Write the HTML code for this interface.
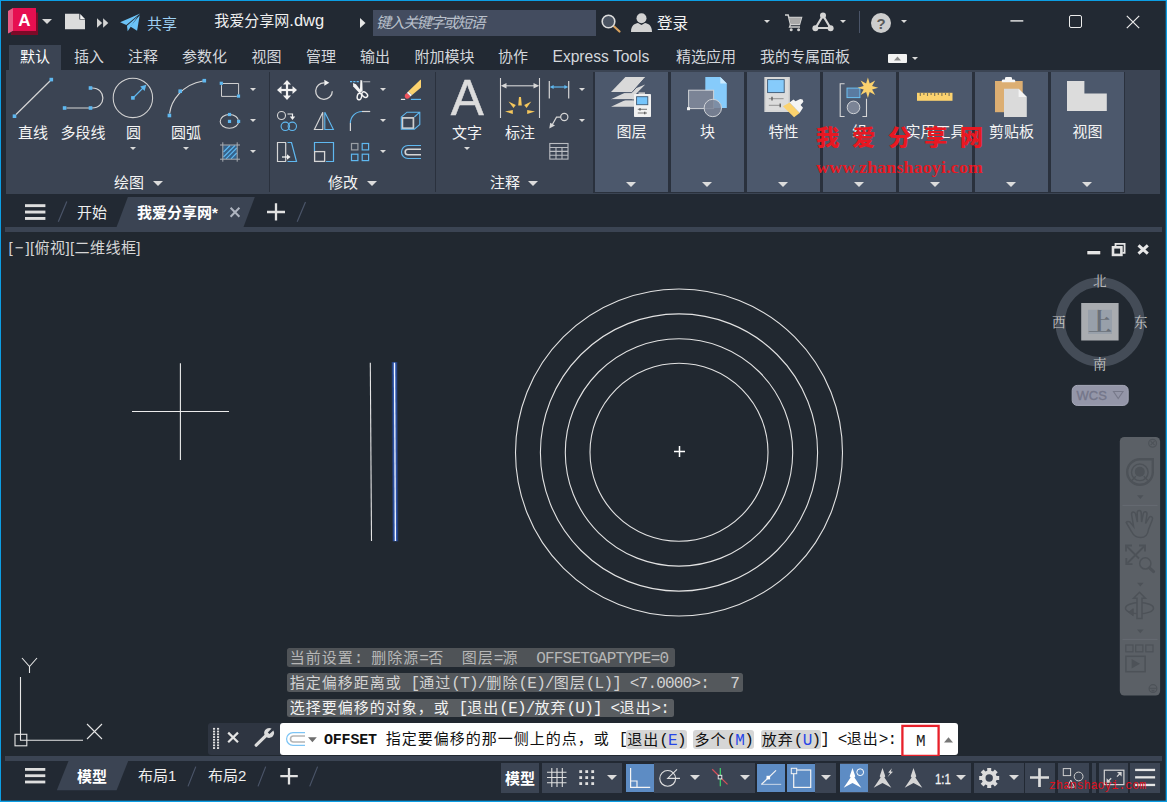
<!DOCTYPE html>
<html lang="zh-CN">
<head>
<meta charset="utf-8">
<title>AutoCAD - 我爱分享网.dwg</title>
<style>
*{box-sizing:border-box;margin:0;padding:0}
html,body{width:1167px;height:802px;overflow:hidden;background:#222933}
body{position:relative;font-family:"Liberation Sans","Noto Sans CJK SC",sans-serif;font-size:15px;color:#f2f2f2;line-height:1}
.abs{position:absolute}
.t{position:absolute;white-space:nowrap;line-height:20px;height:20px}
svg{position:absolute;overflow:visible}
.tri{position:absolute;width:0;height:0;border-left:3.4px solid transparent;border-right:3.4px solid transparent;border-top:3.9px solid #dadada}
.trib{position:absolute;width:0;height:0;border-left:5px solid transparent;border-right:5px solid transparent;border-top:5.5px solid #dcdcdc}
.pn{position:absolute;top:72px;width:73px;height:120px;background:#4c586c}
.lbl{position:absolute;white-space:nowrap;line-height:20px;height:20px;font-size:15px;color:#f4f4f4}
.sb{position:absolute;top:763px;height:30px;background:#3b4453}
.sbb{position:absolute;top:764px;height:28px;background:#5d8cc4}

.cl{position:absolute;white-space:pre;font-family:"Liberation Mono","Noto Sans CJK SC",monospace;font-size:15px;letter-spacing:1px;line-height:18px;height:18.5px}
.cl .m{font-size:16px;letter-spacing:-0.8px;font-family:"Liberation Mono",monospace}
.hl{position:absolute;left:287.3px;height:18.5px;border-radius:2.5px}
.kw{background:#d6d6d6;border-radius:3px;padding:2.9px 1.2px 0 1.2px;margin:0 -1.2px}
.kw b{font-weight:normal;color:#2746e6}
</style>
</head>
<body>
<!-- window border -->
<div class="abs" style="left:0;top:0;width:1167px;height:1px;background:#0c9ee4"></div>
<div class="abs" style="left:0;top:0;width:1px;height:802px;background:#0c9ee4"></div>
<div class="abs" style="left:1166px;top:0;width:1px;height:802px;background:#0c9ee4"></div><div class="abs" style="left:1165px;top:0;width:1px;height:802px;background:rgba(12,158,228,0.3)"></div>
<div class="abs" style="left:0;top:801px;width:1167px;height:1px;background:#0c9ee4"></div><div class="abs" style="left:0;top:800px;width:1167px;height:1px;background:rgba(12,158,228,0.35)"></div>

<!-- TITLEBAR -->
<div id="titlebar">
<!-- logo -->
<svg style="left:8px;top:8px" width="31" height="28" viewBox="0 0 31 28">
<polygon points="0,3 5,0 5,23 0,25.5" fill="#ea5b86"/>
<polygon points="3,24.5 5,23 28,23 28,4.5 30,4.5 30,27 3,27" fill="#7d0a28"/>
<rect x="5" y="0" width="23" height="23" fill="#e60f50"/>
<text x="16.5" y="18" font-family="Liberation Sans, sans-serif" font-weight="bold" font-size="17" fill="#fff" text-anchor="middle">A</text>
</svg>
<div class="trib" style="left:42px;top:19px;border-top-color:#d8d8d8"></div>
<!-- new file -->
<svg style="left:0;top:0" width="160" height="40" viewBox="0 0 160 40"><polygon points="65,13.8 79.4,13.8 79.4,19.6 85,19.6 85,29.3 65,29.3" fill="#dcdcdc"/><polygon points="80.2,14 85,18.9 80.2,18.9" fill="#f6f6f6"/></svg>
<svg style="left:97px;top:18px" width="11.3" height="10" viewBox="0 0 12 10"><polygon points="0,0 5.5,5 0,10" fill="#d4d4d4"/><polygon points="6.5,0 12,5 6.5,10" fill="#d4d4d4"/></svg>
<!-- paper plane -->
<svg style="left:0;top:0" width="160" height="40" viewBox="0 0 160 40"><g fill="#6cc3f7"><polygon points="120.1,22.3 140.2,13.5 126.3,25"/><polygon points="127,25.7 137.6,16.4 127.7,31.3"/><polygon points="139.7,15.3 137.1,30.7 130.3,26.5"/></g></svg>
<div class="t" style="left:147px;top:14.3px;font-size:15px;color:#9dd0f3">共享</div>
<div class="t" style="left:214.3px;top:10.2px;font-size:15px;color:#f0f0f0">我爱分享网<span style="font-size:16.5px">.dwg</span></div>
<svg style="left:360px;top:18px" width="6" height="10" viewBox="0 0 6 10"><polygon points="0,0 5.5,5 0,10" fill="#e6e6e6"/></svg>
<div class="abs" style="left:373px;top:10px;width:223px;height:26px;background:#434c5f"></div>
<div class="t" style="left:376px;top:13px;font-size:15px;color:#b9c0cb;font-style:italic;letter-spacing:-1.5px">键入关键字或短语</div>
<!-- magnifier -->
<svg style="left:601px;top:14px" width="20" height="19" viewBox="0 0 20 19"><line x1="12" y1="11.5" x2="18.5" y2="17.5" stroke="#d9a25e" stroke-width="2.2" stroke-linecap="round"/><circle cx="7.5" cy="7.5" r="6.3" fill="#4a5361" stroke="#dcdcdc" stroke-width="1.6"/></svg>
<!-- user -->
<svg style="left:631px;top:13px" width="21" height="19" viewBox="0 0 21 19"><circle cx="10.5" cy="5.2" r="5" fill="#d2d2d2"/><path d="M0,19 C0,12 4,10.5 7,10 L10.5,12 L14,10 C17,10.5 21,12 21,19 Z" fill="#d2d2d2"/></svg>
<div class="t" style="left:657px;top:13.6px;font-size:15.6px;color:#f4f4f4">登录</div>
<div class="tri" style="left:764px;top:20.0px"></div>
<!-- cart -->
<svg style="left:785px;top:14px" width="18" height="18" viewBox="0 0 18 18"><path d="M0,1 H3.2 L5.5,10.5 H14.5 L16.5,3.5 H4" fill="none" stroke="#cfcfcf" stroke-width="1.5"/><polygon points="4.2,3.8 16.2,3.8 14.4,10 5.8,10" fill="#a9a9a9"/><path d="M5.5,10.5 L4.5,13 H15" fill="none" stroke="#cfcfcf" stroke-width="1.3"/><circle cx="6.2" cy="15.7" r="1.5" fill="#cfcfcf"/><circle cx="13.6" cy="15.7" r="1.5" fill="#cfcfcf"/></svg>
<!-- autodesk app triangle -->
<svg style="left:812px;top:12px" width="22" height="20" viewBox="0 0 22 20"><polygon points="11,3.5 3.5,16 18.5,16" fill="none" stroke="#d4d4d4" stroke-width="2.2" stroke-linejoin="round"/><circle cx="11" cy="3.4" r="3" fill="#d4d4d4"/><circle cx="3.4" cy="16.2" r="3" fill="#d4d4d4"/><circle cx="18.6" cy="16.2" r="3" fill="#d4d4d4"/></svg>
<div class="tri" style="left:840px;top:20.0px"></div>
<div class="abs" style="left:859px;top:11px;width:1px;height:22px;background:#4a5468"></div>
<svg style="left:871px;top:12.5px" width="20" height="20" viewBox="0 0 20 20"><circle cx="10" cy="10" r="10" fill="#cdcdcd"/><text x="10" y="15.5" font-family="Liberation Sans, sans-serif" font-weight="bold" font-size="15" fill="#5a5a5a" text-anchor="middle">?</text></svg>
<div class="tri" style="left:901px;top:20.0px"></div>
<!-- window controls -->
<svg style="left:1010px;top:18px" width="14" height="6" viewBox="0 0 14 6"><path d="M0.4,2.9 H13.3" stroke="#ececec" stroke-width="1.4"/></svg>
<div class="abs" style="left:1068.5px;top:15px;width:13px;height:13px;border:1.3px solid #ececec;border-radius:2px"></div>
<svg style="left:1126px;top:15px" width="14" height="14" viewBox="0 0 14 14"><path d="M0.8,0.8 L13.2,13.2 M13.2,0.8 L0.8,13.2" stroke="#ececec" stroke-width="1.2"/></svg>
</div>
<!-- RIBBON TABS -->
<div id="rtabs">
<div class="abs" style="left:9px;top:45px;width:52px;height:26px;background:#3b4453"></div>
<div class="t" style="left:20px;top:47.4px;font-size:15px;color:#ffffff">默认</div>
<div class="t" style="left:74px;top:47.4px;font-size:15px;color:#d4d7dc">插入</div>
<div class="t" style="left:128px;top:47.4px;font-size:15px;color:#d4d7dc">注释</div>
<div class="t" style="left:182px;top:47.4px;font-size:15px;color:#d4d7dc">参数化</div>
<div class="t" style="left:251.5px;top:47.4px;font-size:15px;color:#d4d7dc">视图</div>
<div class="t" style="left:306px;top:47.4px;font-size:15px;color:#d4d7dc">管理</div>
<div class="t" style="left:360px;top:47.4px;font-size:15px;color:#d4d7dc">输出</div>
<div class="t" style="left:414.5px;top:47.4px;font-size:15px;color:#d4d7dc">附加模块</div>
<div class="t" style="left:498px;top:47.4px;font-size:15px;color:#d4d7dc">协作</div>
<div class="t" style="left:676px;top:47.4px;font-size:15px;color:#d4d7dc">精选应用</div>
<div class="t" style="left:760px;top:47.4px;font-size:15px;color:#d4d7dc">我的专属面板</div>
<div class="t" style="left:552.5px;top:47.4px;font-size:15.6px;color:#d4d7dc" id="et">Express Tools</div>
<div class="abs" style="left:888px;top:54px;width:19px;height:9px;background:#f2f2f2;border-radius:1px"></div>
<svg style="left:894px;top:56px" width="7" height="5" viewBox="0 0 7 5"><polygon points="0,4.5 3.5,0.5 7,4.5" fill="#8a8a8a"/></svg>
<div class="tri" style="left:912px;top:56.5px"></div>
</div>
<!-- RIBBON -->
<div id="ribbon">
<div class="abs" style="left:6px;top:70px;width:1154px;height:124px;background:#3b4453"></div>
<div class="abs" style="left:269px;top:72px;width:1px;height:120px;background:#2a313d"></div><div class="abs" style="left:435px;top:72px;width:1px;height:120px;background:#2a313d"></div>
<div class="abs" style="left:593px;top:71.5px;width:532.3px;height:121px;background:#2a313d"></div>
<div class="lbl" style="left:18px;top:123px">直线</div>
<div class="lbl" style="left:60.5px;top:123px">多段线</div>
<div class="lbl" style="left:126px;top:123px">圆</div>
<div class="lbl" style="left:171px;top:123px">圆弧</div>
<div class="lbl" style="left:452px;top:123px">文字</div>
<div class="lbl" style="left:505px;top:123px">标注</div>
<div class="lbl" style="left:114px;top:172.5px">绘图</div>
<div class="lbl" style="left:328px;top:172.5px">修改</div>
<div class="lbl" style="left:490px;top:172.5px">注释</div>
<div class="abs" style="left:450.8px;top:70.3px;font-size:49.5px;line-height:56px;color:#dcdcdc;-webkit-text-stroke:0.5px #dcdcdc;font-family:'Liberation Sans',sans-serif" id="bigA">A</div>
<div class="tri" style="left:130.2px;top:146.7px"></div><div class="tri" style="left:183px;top:146.7px"></div><div class="tri" style="left:464px;top:146.7px"></div><div class="tri" style="left:250px;top:88.1px"></div><div class="tri" style="left:250px;top:119.0px"></div><div class="tri" style="left:250px;top:149.7px"></div><div class="tri" style="left:380px;top:88.1px"></div><div class="tri" style="left:380px;top:119.0px"></div><div class="tri" style="left:380px;top:149.7px"></div><div class="tri" style="left:579px;top:88.1px"></div><div class="tri" style="left:579px;top:119.0px"></div>
<div class="trib" style="left:152.5px;top:181.3px"></div><div class="trib" style="left:366.5px;top:181.3px"></div><div class="trib" style="left:528px;top:181.3px"></div>
<div class="pn" style="left:595px"><div class="lbl" style="left:0;width:73px;text-align:center;top:49.6px">图层</div><div class="trib" style="left:30.7px;top:110px"></div></div>
<div class="pn" style="left:671px"><div class="lbl" style="left:0;width:73px;text-align:center;top:49.6px">块</div><div class="trib" style="left:30.7px;top:110px"></div></div>
<div class="pn" style="left:747px"><div class="lbl" style="left:0;width:73px;text-align:center;top:49.6px">特性</div><div class="trib" style="left:30.7px;top:110px"></div></div>
<div class="pn" style="left:823px"><div class="lbl" style="left:0;width:73px;text-align:center;top:49.6px">组</div><div class="trib" style="left:30.7px;top:110px"></div></div>
<div class="pn" style="left:899px"><div class="lbl" style="left:0;width:73px;text-align:center;top:49.6px">实用工具</div><div class="trib" style="left:30.7px;top:110px"></div></div>
<div class="pn" style="left:975px"><div class="lbl" style="left:0;width:73px;text-align:center;top:49.6px">剪贴板</div><div class="trib" style="left:30.7px;top:110px"></div></div>
<div class="pn" style="left:1051px"><div class="lbl" style="left:0;width:73px;text-align:center;top:49.6px">视图</div><div class="trib" style="left:30.7px;top:110px"></div></div>
<svg style="left:0;top:0" width="1167" height="802" viewBox="0 0 1167 802" id="ribsvg">
<line x1="16" y1="114.5" x2="50" y2="81" stroke="#d6d6d6" stroke-width="1.2"/><rect x="12.7" y="114.4" width="3.6" height="3.6" fill="#5fb8f0"/><rect x="49.5" y="77.8" width="3.6" height="3.6" fill="#5fb8f0"/>
<path d="M66.5,108 H89 M92,88 C106.5,88 106.5,108 92,108" fill="none" stroke="#d6d6d6" stroke-width="1.2"/><rect x="62.8" y="106.2" width="3.6" height="3.6" fill="#5fb8f0"/><rect x="88.7" y="106.2" width="3.6" height="3.6" fill="#5fb8f0"/><rect x="88.7" y="86.2" width="3.6" height="3.6" fill="#5fb8f0"/>
<circle cx="132.9" cy="97.9" r="19.7" fill="none" stroke="#d2d2d2" stroke-width="1.05"/><line x1="133" y1="98" x2="143.5" y2="87.5" stroke="#5fb8f0" stroke-width="1.1"/><polygon points="146.3,84.8 140.2,86.6 144.6,91" fill="#5fb8f0"/><rect x="131.1" y="96.1" width="3.6" height="3.6" fill="#5fb8f0"/>
<path d="M169.6,113.5 C171,101 182,84.5 203,81" fill="none" stroke="#d6d6d6" stroke-width="1.2"/><rect x="167.6" y="113.7" width="3.6" height="3.6" fill="#5fb8f0"/><rect x="178.4" y="89.4" width="3.6" height="3.6" fill="#5fb8f0"/><rect x="202.5" y="78.9" width="3.6" height="3.6" fill="#5fb8f0"/>
<path d="M223,83.5 H238.6 V94.6 M236.8,96.4 H221.5 V85.2" fill="none" stroke="#d0d0d0" stroke-width="1"/><rect x="219.7" y="81.7" width="3.2" height="3.2" fill="#5fb8f0"/><rect x="236.9" y="94.5" width="3.2" height="3.2" fill="#5fb8f0"/>
<ellipse cx="229.4" cy="121.4" rx="9.2" ry="6.9" fill="none" stroke="#d6d6d6" stroke-width="1.1"/><rect x="227.9" y="112.9" width="3.2" height="3.2" fill="#5fb8f0"/><rect x="227.9" y="119.8" width="3.2" height="3.2" fill="#5fb8f0"/><rect x="237.0" y="119.8" width="3.2" height="3.2" fill="#5fb8f0"/>
<rect x="223.2" y="145.3" width="13.6" height="13.6" fill="#35638c"/><path d="M223.5,152 L230,145.5 M223.5,157 L235,145.5 M226,158.8 L236.7,148 M231,158.8 L236.7,153" stroke="#5fb8f0" stroke-width="1.1" fill="none"/><path d="M222.8,142.3 V161.7 M237.2,142.3 V161.7 M220,145 H240 M220,159.2 H240" stroke="#a9adb3" stroke-width="1" fill="none"/>
<g transform="translate(287,90)" fill="#f2f2f2" stroke="none"><rect x="-7" y="-1.1" width="14" height="2.2"/><rect x="-1.1" y="-7" width="2.2" height="14"/><polygon points="-10,0 -5.5,-4 -5.5,4"/><polygon points="10,0 5.5,-4 5.5,4"/><polygon points="0,-10 -4,-5.5 4,-5.5"/><polygon points="0,10 -4,5.5 4,5.5"/></g>
<g transform="translate(324,91)"><path d="M0.5,-8.2 A8.3,8.3 0 1 0 8.3,0.2" fill="none" stroke="#d6d6d6" stroke-width="1.3"/><polygon points="0.3,-11.2 0.3,-5.2 5.3,-8.3" fill="#f2f2f2"/></g>
<g><path d="M350,81.7 H359" stroke="#5fb8f0" stroke-width="1.3" stroke-dasharray="2.2 1.1"/><path d="M363.2,81.7 H370.2" stroke="#9a9fa6" stroke-width="1.3"/><polygon points="353,83 356,84.3 361.6,91.5 359.6,93.2 353.2,86.4" fill="#f4f4f4"/><polygon points="360.4,80 362.3,80.6 362.6,91 359.8,92.5" fill="#f4f4f4"/><ellipse cx="359.4" cy="96.5" rx="2.2" ry="3.3" fill="none" stroke="#f4f4f4" stroke-width="1.4" transform="rotate(12 359.4 96.5)"/><ellipse cx="364.7" cy="94.7" rx="2.2" ry="3.3" fill="none" stroke="#f4f4f4" stroke-width="1.4" transform="rotate(-50 364.7 94.7)"/></g>
<g><path d="M400.9,99.4 H405.2" stroke="#e6e6e6" stroke-width="1.2"/><path d="M410.9,99.4 H421" stroke="#5fb8f0" stroke-width="1.2"/><polygon points="421,79.6 421,87.5 412.1,94.9 408.2,91.6 419.6,80.4" fill="#fbd26e"/><polygon points="408.2,91.6 412.1,94.9 410.4,96.6 406.8,93" fill="#f8f4f0"/><path d="M406.8,93 L410.4,96.6 Q408.6,99.6 406.2,98.6 Q403.8,97 405.2,94.6 Z" fill="#f0545c"/></g>
<g transform="translate(287,121)"><circle cx="-5.5" cy="-5.5" r="4" fill="none" stroke="#d6d6d6" stroke-width="1.1"/><path d="M0.5,-7 H5.5 V-3.5" fill="none" stroke="#f2f2f2" stroke-width="1.2"/><polygon points="5.5,-1 2.8,-4.5 8.2,-4.5" fill="#f2f2f2"/><circle cx="-1.7" cy="5.3" r="4.2" fill="none" stroke="#5fb8f0" stroke-width="1.1"/><circle cx="5.3" cy="5.3" r="4.2" fill="none" stroke="#5fb8f0" stroke-width="1.1"/></g>
<g transform="translate(324,121)"><polygon points="-1.2,-8.8 -1.2,8.5 -9.6,8.5" fill="none" stroke="#d6d6d6" stroke-width="1.1"/><polygon points="0.8,-8.8 0.8,8.5 9.4,8.5" fill="none" stroke="#5fb8f0" stroke-width="1.1"/></g>
<g fill="none" stroke-width="1.2"><path d="M350.4,131 V123" stroke="#d6d6d6"/><path d="M350.4,123 A11.6,11.6 0 0 1 362,111.5" stroke="#5fb8f0"/><path d="M362,111.5 H370.2" stroke="#d6d6d6"/></g>
<g fill="none"><rect x="402.4" y="117.9" width="11" height="10.3" stroke="#cfcfcf" stroke-width="1.7"/><path d="M401.3,129.2 V117 L407,112.2 H419.8 V124.4 L414.4,129.2 Z M414.4,117 L419.8,112.2" stroke="#5fb8f0" stroke-width="1.1"/></g>
<g transform="translate(287,152)"><path d="M-1,-9.5 H-9.5 V9.5 H-1 M-1.3,-9.5 V9.5" fill="none" stroke="#d6d6d6" stroke-width="1.2"/><path d="M-5,5 H1" stroke="#f2f2f2" stroke-width="1.3"/><polygon points="3.5,5 0,2.3 0,7.7" fill="#f2f2f2"/><path d="M0.5,-9.5 H4.5 L9.5,9.5 H0.5" fill="none" stroke="#5fb8f0" stroke-width="1.2"/></g>
<g transform="translate(324,152)"><path d="M-9.5,-0.5 V-9.5 H9.5 V9.5 H2" fill="none" stroke="#5fb8f0" stroke-width="1.2"/><rect x="-9.4" y="-0.4" width="10" height="9.8" fill="none" stroke="#d6d6d6" stroke-width="1.3"/></g>
<g transform="translate(360,152)" fill="none" stroke-width="1.2"><rect x="-8.5" y="-8.5" width="6.4" height="6.4" stroke="#9a9fa6"/><rect x="2.2" y="-8.5" width="6.4" height="6.4" stroke="#5fb8f0"/><rect x="-8.5" y="2.2" width="6.4" height="6.4" stroke="#5fb8f0"/><rect x="2.2" y="2.2" width="6.4" height="6.4" stroke="#5fb8f0"/></g>
<g transform="translate(411,152)" fill="none"><path d="M10,-6.5 H-3 A6.5,6.5 0 0 0 -3,6.5 H10" stroke="#5fb8f0" stroke-width="1.2"/><path d="M10,-2.8 H-3 A2.8,2.8 0 0 0 -3,2.8 H10" stroke="#d6d6d6" stroke-width="1.6"/></g>
<path d="M500.5,78 V118 M539.5,78 V118" stroke="#d6d6d6" stroke-width="1.1"/><path d="M504,85.8 H536" stroke="#d6d6d6" stroke-width="1.1"/><polygon points="500.8,85.8 506.5,83 506.5,88.6" fill="#d6d6d6"/><polygon points="539.2,85.8 533.5,83 533.5,88.6" fill="#d6d6d6"/>
<g fill="#f5c75c"><polygon points="519,97 521,97 521.8,105.5 518.2,105.5"/><polygon points="508.5,101.5 515.8,105 513.5,108"/><polygon points="531.3,101.5 524.2,105 526.5,108"/><polygon points="505,111.5 512.8,110 512.8,114"/><polygon points="535,111.5 527.2,110 527.2,114"/></g>
<path d="M549.3,81 V98.5 M568.7,81 V98.5" stroke="#d6d6d6" stroke-width="1.2"/><path d="M552,87 H566" stroke="#5fb8f0" stroke-width="1.2"/><polygon points="549.8,87 553.6,85 553.6,89" fill="#5fb8f0"/><polygon points="568.2,87 564.4,85 564.4,89" fill="#5fb8f0"/>
<circle cx="564.3" cy="117" r="3.6" fill="none" stroke="#d6d6d6" stroke-width="1.2"/><path d="M560.7,117.2 H556.5 L551.5,126" fill="none" stroke="#d6d6d6" stroke-width="1.2"/><polygon points="549.3,128.6 550.2,122.8 555,125.5" fill="#d6d6d6"/>
<g stroke="#b9bcc1" stroke-width="1.1" fill="none"><rect x="549.8" y="143.5" width="18.2" height="15.6"/><path d="M549.8,147.5 H568 M549.8,151.4 H568 M549.8,155.3 H568 M556,147.5 V159 M562,147.5 V159"/></g>
<g fill="#d9d9d9"><polygon points="611,106.7 625.4,100 632,100 634,96 634,106.7"/><polygon points="611,99.3 625.4,92.5 645.2,84.5 634,96 634,99.3"/><polygon points="611,92 625.4,77 645.2,77 632.2,92"/></g>
<path d="M611.8,92.6 L631.8,92.6 L644.8,78" fill="none" stroke="#4c586c" stroke-width="1"/><path d="M611.8,99.9 L634,99.9" fill="none" stroke="#4c586c" stroke-width="1"/>
<rect x="638.5" y="92.3" width="6.5" height="2.2" fill="#c4c4c4"/><rect x="634" y="94" width="17" height="23" rx="0.8" fill="#f1f1f1"/><rect x="636.6" y="96.7" width="11.2" height="8" fill="#76c5fb" stroke="#3d5873" stroke-width="0.9"/><path d="M637.8,109.3 H647 M637.8,113 H647" stroke="#666" stroke-width="0.9"/><path d="M640,108 V110.6 M644.8,111.7 V114.3" stroke="#444" stroke-width="1"/>
<polygon points="705.3,77 720.3,77 726.8,83.6 726.8,108 705.3,108" fill="#86cbfb"/><polygon points="720.3,77 726.8,83.6 720.3,83.6" fill="#cbe9fd"/>
<rect x="688.6" y="90.2" width="25" height="18.4" fill="#7b8496" stroke="#cfd2d6" stroke-width="1"/><rect x="687" y="107.2" width="3" height="3" fill="#f2f2f2"/><circle cx="712.8" cy="108" r="8.7" fill="#7b8496" fill-opacity="0.85" stroke="#cfd2d6" stroke-width="1"/>
<rect x="764.4" y="77" width="25.4" height="35" fill="#dcdcdc"/><rect x="765.4" y="78" width="23.4" height="33" fill="none" stroke="#cfcfcf" stroke-width="0.8"/><rect x="767.6" y="79.6" width="16.6" height="13" fill="#86cbfb" stroke="#3d5873" stroke-width="0.9"/><path d="M768.8,98.7 H783.6 M768.8,105.3 H781" stroke="#8a8a8a" stroke-width="0.9"/><path d="M772,96.8 V100.6 M780.2,103.4 V107.2" stroke="#555" stroke-width="1.3"/>
<polygon points="782.9,106.3 789.8,102.4 799.6,113.1 794.1,117.2" fill="#fbd26e"/><polygon points="789.5,102.6 793.5,99.6 795.5,101.2 800.2,99 802.6,99.4 803.4,101.8 800.6,105 803,107.8 799.6,113.1" fill="#f4f4f4"/>
<path d="M844.6,83.8 H840.2 V116.5 H844.6 M862.4,116.5 H866.5 V98.8" fill="none" stroke="#d6d6d6" stroke-width="1.1"/><rect x="847" y="88.1" width="12.9" height="9.5" fill="#5a7ba1" stroke="#6cc0f2" stroke-width="1"/><circle cx="853.5" cy="107.4" r="6.3" fill="#7b8496" stroke="#cfd2d6" stroke-width="1"/>
<polygon points="867.9,77.5 869.7,83.6 875.2,80.5 872.1,86.0 878.2,87.8 872.1,89.6 875.2,95.1 869.7,92.0 867.9,98.1 866.1,92.0 860.6,95.1 863.7,89.6 857.6,87.8 863.7,86.0 860.6,80.5 866.1,83.6" fill="#fbd26e"/>
<rect x="917" y="92.8" width="35.5" height="8" fill="#fbd26e"/><path d="M920.3,92.8 V96 M923.9,92.8 V95 M927.5,92.8 V96 M931.1,92.8 V95 M934.7,92.8 V96 M938.3,92.8 V95 M941.9,92.8 V96 M945.5,92.8 V95 M949.1,92.8 V96" stroke="#7d7458" stroke-width="1.1"/>
<rect x="995" y="81" width="27.7" height="31.2" fill="#dcae72"/><path d="M1001.8,82.3 V80.5 Q1001.8,79.5 1003.5,79.5 H1005 V78 Q1005,77 1006.5,77 H1010.5 Q1012,77 1012,78 V79.5 H1013.5 Q1015.2,79.5 1015.2,80.5 V82.3 Z" fill="#f6f6f6"/><polygon points="1004,88.7 1018.6,88.7 1026.8,97 1026.8,117 1004,117" fill="#dadada"/><polygon points="1018.6,88.7 1026.8,97 1018.6,97" fill="#f3f3f3"/>
<polygon points="1067,81 1084.4,81 1084.4,93.6 1106.8,93.6 1106.8,111 1067,111" fill="#dcdcdc"/>
</svg>
</div>
<!-- FILE TABS -->
<div id="ftabs">
<div class="abs" style="left:5px;top:227px;width:1157px;height:5px;background:#3b4453"></div>
<svg style="left:0;top:0" width="1167" height="802" viewBox="0 0 1167 802">
<polygon points="127.9,197 254.8,197 243.5,227 116.6,227" fill="#3b4453"/>
<g fill="#dedede"><rect x="25" y="204.2" width="20.4" height="2.9"/><rect x="25" y="210.6" width="20.4" height="2.9"/><rect x="25" y="217" width="20.4" height="2.9"/></g>
<path d="M66.8,201.6 L58.3,221.7 M305.5,201.9 L297.2,221.7" stroke="#4a5468" stroke-width="1.2"/>
<path d="M230.6,207.8 L239.4,216.8 M239.4,207.8 L230.6,216.8" stroke="#aeb4bf" stroke-width="2"/>
<path d="M267,212 H285 M276,203.2 V220.6" stroke="#e2e2e2" stroke-width="2.3"/>
</svg>
<div class="t" style="left:77px;top:202.5px;font-size:15px;color:#eeeeee">开始</div>
<div class="t" style="left:137px;top:202.5px;font-size:15px;color:#ffffff;font-weight:bold">我爱分享网*</div>
</div>
<!-- DRAWING -->
<div id="drawing">
<div class="abs" style="left:1px;top:232px;width:1164px;height:524px;background:#212830"></div>
<div class="t" style="left:8.6px;top:238px;font-size:15.1px;color:#d6d6d6;letter-spacing:0.35px" id="vpl">[<span style="margin:0 1.6px">−</span>][俯视][二维线框]</div>
<svg style="left:0;top:0" width="1167" height="802" viewBox="0 0 1167 802">
<!-- crosshair -->
<path d="M180.4,363.2 V460 M132,411.5 H229" stroke="#ececec" stroke-width="1.1"/>
<!-- lines -->
<line x1="370.3" y1="362.7" x2="371.5" y2="541" stroke="#e4e4e4" stroke-width="1.1"/>
<line x1="394.5" y1="362" x2="395.4" y2="541.6" stroke="#2c52a8" stroke-opacity="0.3" stroke-width="6.2"/><line x1="394.5" y1="362.3" x2="395.4" y2="541.3" stroke="#2c52a8" stroke-opacity="0.6" stroke-width="4.8"/><line x1="394.5" y1="362.5" x2="395.4" y2="541" stroke="#2d54ac" stroke-width="3.4"/>
<line x1="394.5" y1="362.7" x2="395.4" y2="541" stroke="#f2f6ff" stroke-width="1.3"/>
<!-- circles -->
<g fill="none" stroke="#e2e2e2" stroke-width="1.1"><circle cx="679" cy="452.5" r="163.5"/><circle cx="679" cy="452.5" r="138.6"/><circle cx="679" cy="452.4" r="113.7"/><circle cx="679" cy="452.2" r="89"/></g>
<path d="M674,451.5 H685 M679.5,446 V457" stroke="#ffffff" stroke-width="1.5"/>
<!-- UCS -->
<g fill="none" stroke="#e6e6e6" stroke-width="1.1"><path d="M20.5,677 V740.2 H83"/><rect x="15" y="734.3" width="11.8" height="11.5"/><path d="M22,658 L29.5,666.5 L37,658 M29.5,666.5 V673"/><path d="M87,724 L102,739 M102,724 L87,739"/></g>
<!-- viewport controls -->
<g><rect x="1086.5" y="250.3" width="14.5" height="4.8" fill="#1a1e25"/><rect x="1087.3" y="251" width="13" height="3.4" fill="#e4e4e4"/>
<path d="M1115.5,246 V243.8 H1124.6 V252.8 H1122.4" fill="none" stroke="#e4e4e4" stroke-width="1.8"/>
<rect x="1113" y="247.3" width="8.4" height="7.6" fill="none" stroke="#e4e4e4" stroke-width="2.6"/>
<path d="M1138.5,245.3 L1147.8,253.7 M1147.8,245.3 L1138.5,253.7" stroke="#e8e8e8" stroke-width="3"/></g>
<!-- viewcube -->
<circle cx="1100" cy="322" r="39.8" fill="none" stroke="#444c57" stroke-width="9.6"/>
<rect x="1081.2" y="303" width="37.4" height="37.5" fill="#a9acb0"/><rect x="1088" y="309.8" width="24" height="24.2" fill="#98a0aa"/>
<rect x="1072.2" y="385.4" width="56" height="20" rx="5" fill="#9496a8" stroke="#a6a8b8" stroke-width="1"/>
<path d="M1113.5,391.5 H1123 L1118.2,398.5 Z" fill="none" stroke="#77798a" stroke-width="1.1"/>
<!-- navbar -->
<rect x="1119.8" y="437" width="40.3" height="258.6" rx="4.5" fill="#5b6066"/>
<path d="M1122.5,505.4 H1157.5 M1122.5,639.4 H1157.5" stroke="#666b71" stroke-width="1"/>
<g fill="none" stroke="#4d5258" stroke-width="1.6">
<circle cx="1152.6" cy="443.2" r="3.9" stroke-width="1.2"/><path d="M1150.6,441.2 L1154.6,445.2 M1154.6,441.2 L1150.6,445.2" stroke-width="1.1"/>
<circle cx="1153" cy="688.6" r="3.9" stroke-width="1.2"/><path d="M1149.5,688.3 H1156.5" stroke-width="1"/><path d="M1150.8,689.8 H1155.2 L1153,692 Z" fill="#4d5258" stroke="none"/>
<!-- wheel -->
<path d="M1140,459.2 H1152.8 V472.5 A12.8,12.8 0 1 1 1140,459.2 Z" stroke-width="2.4"/>
<circle cx="1139.8" cy="472.3" r="8.3" stroke-width="1.4"/><circle cx="1139.8" cy="471.8" r="5" fill="#4d5258" stroke="none"/>
<path d="M1135.8,476.3 L1131.8,480.6 M1143.8,476.3 L1147.8,480.6" stroke-width="1.4"/>
<!-- hand -->
<path d="M1126.2,522.5 Q1127.5,520.6 1130,522 L1133.6,526.5 L1131.6,514.5 Q1131.4,512.2 1133.2,512 Q1135,511.9 1135.6,514 L1137.4,522 L1137.2,512.6 Q1137.3,510.4 1139.2,510.4 Q1141,510.4 1141.2,512.6 L1141.6,522 L1143.3,513.6 Q1143.8,511.6 1145.5,511.8 Q1147.300,512.2 1147,514.4 L1145.6,523.5 L1149,517.6 Q1150.2,516 1151.8,516.8 Q1153.200,517.800 1152.300,519.800 L1148.500,529.500 Q1147.500,537.600 1140.500,537.600 Q1134.500,537.600 1131.500,531.500 Z" stroke-width="1.5"/>
<!-- zoom extents -->
<path d="M1127,546.500 L1139,558.500 M1144,546.500 L1127.500,563" stroke-width="1.8"/>
<path d="M1126,551.500 V545.500 H1132 M1139,545.500 H1145 V551.500 M1126.300,558 V564.200 H1132.500" stroke-width="1.800"/>
<circle cx="1145.300" cy="563.400" r="5.600" stroke-width="1.500"/><path d="M1149.500,567.800 L1153.600,571.600" stroke-width="3" stroke-linecap="round"/>
<!-- orbit -->
<ellipse cx="1139.500" cy="608.200" rx="14" ry="5.600" stroke-width="1.500"/>
<path d="M1137,618.500 V598.300 H1133.600 L1139.500,592.300 L1145.400,598.300 H1142 V618.500 Z" fill="#5b6066" stroke-width="1.500"/>
<path d="M1133.200,608.800 L1128.500,612.300 L1133.200,615.800 Z" fill="#4d5258" stroke-width="1"/>
<!-- showmotion -->
<rect x="1125.800" y="645" width="7.200" height="6.800" stroke-width="1.200"/><rect x="1135.700" y="645" width="7.200" height="6.800" stroke-width="1.200"/><rect x="1145.800" y="645" width="7.200" height="6.800" stroke-width="1.200"/>
<rect x="1125.900" y="656.300" width="19.200" height="15.400" stroke-width="1.500"/>
</g>
<g fill="#4d5258"><polygon points="1137,495.300 1143.600,495.300 1140.300,498.900"/><polygon points="1137,582.800 1143.600,582.800 1140.300,586.400"/><polygon points="1137,629.600 1143.600,629.600 1140.300,633.200"/><polygon points="1131.600,659 1131.600,668.400 1140,663.700"/></g>
</svg>
<div class="t" style="left:1093px;top:271.500px;font-size:13.500px;color:#c6c6c6;font-family:'Liberation Serif','Noto Serif CJK SC',serif">北</div>
<div class="t" style="left:1093px;top:354.500px;font-size:13.500px;color:#c6c6c6;font-family:'Liberation Serif','Noto Serif CJK SC',serif">南</div>
<div class="t" style="left:1052px;top:313px;font-size:13.500px;color:#c6c6c6;font-family:'Liberation Serif','Noto Serif CJK SC',serif">西</div>
<div class="t" style="left:1134px;top:313px;font-size:13.500px;color:#c6c6c6;font-family:'Liberation Serif','Noto Serif CJK SC',serif">东</div>
<div class="t" style="left:1088px;top:309px;font-size:24px;line-height:26px;height:26px;color:#6a7079;font-weight:bold;font-family:'Liberation Serif','Noto Serif CJK SC',serif">上</div>
<div class="t" style="left:1076.5px;top:385.5px;font-size:13px;color:#74768a;-webkit-text-stroke:0.35px #74768a;font-family:'Liberation Sans',sans-serif">WCS</div>
</div>
<!-- CMDLINE -->
<div id="cmd">
<div class="hl" style="top:648.4px;width:387.5px;background:#4f5357"></div>
<div class="cl" id="h0" style="left:289.7px;top:650.1px;color:#b6b6b6">当前设置<span class="m">: </span>删除源<span class="m">=</span>否<span class="m">  </span>图层<span class="m">=</span>源<span class="m">  OFFSETGAPTYPE=0</span></div>
<div class="hl" style="top:673.4px;width:455.7px;background:#54585c"></div>
<div class="cl" id="h1" style="left:289.7px;top:675.1px;color:#d2d2d2">指定偏移距离或<span class="m"> [</span>通过<span class="m">(T)/</span>删除<span class="m">(E)/</span>图层<span class="m">(L)] &lt;7.0000&gt;:  <span style="margin-left:3.7px">7</span></span></div>
<div class="hl" style="top:698.5px;width:387px;background:#595d61"></div>
<div class="cl" id="h2" style="left:289.7px;top:700.2px;color:#f2f2f2">选择要偏移的对象，或<span class="m"> [</span>退出<span class="m">(E)/</span>放弃<span class="m">(U)] &lt;</span>退出<span class="m">&gt;:</span></div>
<div class="abs" style="left:208px;top:723px;width:76px;height:32px;background:#2e3541;border-radius:3px 0 0 3px"></div>
<div class="abs" style="left:280.2px;top:723px;width:677.8px;height:32px;background:#ffffff;border-radius:3px"></div>
<svg style="left:0;top:0" width="1167" height="802" viewBox="0 0 1167 802">
<g fill="#e0e0e0"><rect x="213" y="727.90" width="2.1" height="1.8"/><rect x="213" y="730.65" width="2.1" height="1.8"/><rect x="213" y="733.40" width="2.1" height="1.8"/><rect x="213" y="736.15" width="2.1" height="1.8"/><rect x="213" y="738.90" width="2.1" height="1.8"/><rect x="213" y="741.65" width="2.1" height="1.8"/><rect x="213" y="744.40" width="2.1" height="1.8"/><rect x="213" y="747.15" width="2.1" height="1.8"/><rect x="217" y="727.90" width="2.1" height="1.8"/><rect x="217" y="730.65" width="2.1" height="1.8"/><rect x="217" y="733.40" width="2.1" height="1.8"/><rect x="217" y="736.15" width="2.1" height="1.8"/><rect x="217" y="738.90" width="2.1" height="1.8"/><rect x="217" y="741.65" width="2.1" height="1.8"/><rect x="217" y="744.40" width="2.1" height="1.8"/><rect x="217" y="747.15" width="2.1" height="1.8"/></g>
<path d="M228.2,732.6 L238,742.2 M238,732.6 L228.2,742.2" stroke="#e4e4e4" stroke-width="2.2"/>
<path d="M256.2,745.2 L266.5,735.2" stroke="#dcdcdc" stroke-width="3.2" stroke-linecap="round"/>
<path d="M271.6,728.6 L267.8,732.4 L269.4,734 L273.4,730.4 A5,5 0 1 1 271.6,728.6 Z" fill="#dcdcdc" transform="rotate(0 268 733)"/>
<path d="M305,732.6 H293 A6.4,6.4 0 0 0 293,745.4 H305" fill="none" stroke="#7cc4f5" stroke-width="1.2"/>
<path d="M305,736 H293.5 A3,3 0 0 0 293.5,742 H305" fill="none" stroke="#b4b4b4" stroke-width="1.6"/>
<polygon points="308,737.3 316.800,737.3 312.400,742.2" fill="#6e6e6e"/>
<polygon points="944,742.5 953,742.5 948.500,737.300" fill="#777777"/>
<rect x="902.400" y="725.900" width="36.200" height="30" fill="#ffffff" stroke="#e8202a" stroke-width="2.300"/>
</svg>
<div class="cl" id="cmdt" style="left:324px;top:731.4px;color:#111111"><span class="m" style="font-weight:bold;font-size:15px;letter-spacing:-0.2px">OFFSET </span>指定要偏移的那一侧上的点，或<span class="m"> </span><span class="m">[</span><span class="kw">退出<span class="m">(<b>E</b>)</span></span><span class="m"> </span><span class="kw">多个<span class="m">(<b>M</b>)</span></span><span class="m"> </span><span class="kw">放弃<span class="m">(<b>U</b>)</span></span><span class="m">] &lt;</span>退出<span class="m">&gt;:</span></div>
<div class="cl" style="left:916px;top:732.6px;color:#222"><span class="m">M</span></div>
</div>
<!-- STATUS -->
<div id="status">
<div class="abs" style="left:5px;top:756px;width:1157px;height:5px;background:#3b4453"></div>
<div class="sb" style="left:501px;width:38px"></div><div class="sb" style="left:542px;width:80px"></div><div class="sb" style="left:654px;width:101px"></div><div class="sb" style="left:815px;width:21px"></div><div class="sb" style="left:839.5px;width:131.5px"></div><div class="sb" style="left:974px;width:50px"></div><div class="sb" style="left:1025px;width:30px"></div><div class="sb" style="left:1058px;width:31px"></div><div class="sb" style="left:1092px;width:4px"></div><div class="sb" style="left:1099px;width:29px"></div><div class="sb" style="left:1130px;width:30px"></div>
<div class="sbb" style="left:625.6px;width:28.4px"></div><div class="sbb" style="left:756.6px;width:28.4px"></div><div class="sbb" style="left:786.8px;width:28.2px"></div><div class="sbb" style="left:840.3px;width:27.8px"></div>
<div class="trib" style="left:606.9px;top:774.8px"></div><div class="trib" style="left:689.8px;top:774.8px"></div><div class="trib" style="left:740px;top:774.8px"></div><div class="trib" style="left:820.9px;top:774.8px"></div><div class="trib" style="left:956.2px;top:774.8px"></div><div class="trib" style="left:1009px;top:774.8px"></div>
<svg style="left:0;top:0" width="1167" height="802" viewBox="0 0 1167 802">
<polygon points="68.5,761 128.2,761 116.6,790.3 56.8,790.3" fill="#3b4453"/>
<g fill="#dedede"><rect x="25" y="768" width="20.3" height="2.8"/><rect x="25" y="774.3" width="20.3" height="2.8"/><rect x="25" y="780.6" width="20.3" height="2.8"/></g>
<path d="M195.8,766.6 L188,786.4 M265.7,766.6 L258,786.4 M317.6,766.6 L309.7,786.4" stroke="#4a5468" stroke-width="1.2"/>
<path d="M280.3,776.2 H297.8 M289,768 V784.4" stroke="#e2e2e2" stroke-width="2.3"/>
<path d="M551.8,768 V787 M557,768 V787 M562.3,768 V787 M547,772.3 H566.5 M547,777.5 H566.5 M547,782.8 H566.5" stroke="#e0e0e0" stroke-width="1.1"/>
<rect x="579.3" y="770.2" width="2.8" height="2.8" fill="#e0e0e0"/><rect x="579.3" y="776.2" width="2.8" height="2.8" fill="#e0e0e0"/><rect x="579.3" y="782.2" width="2.8" height="2.8" fill="#e0e0e0"/><rect x="585.3" y="770.2" width="2.8" height="2.8" fill="#e0e0e0"/><rect x="585.3" y="776.2" width="2.8" height="2.8" fill="#e0e0e0"/><rect x="585.3" y="782.2" width="2.8" height="2.8" fill="#e0e0e0"/><rect x="591.3" y="770.2" width="2.8" height="2.8" fill="#e0e0e0"/><rect x="591.3" y="776.2" width="2.8" height="2.8" fill="#e0e0e0"/><rect x="591.3" y="782.2" width="2.8" height="2.8" fill="#e0e0e0"/>
<path d="M630.6,768 V787.3 H650.2 M630.6,781 H637 V787.3" fill="none" stroke="#f4f4f4" stroke-width="1.2"/>
<circle cx="667.7" cy="778.4" r="7.9" fill="none" stroke="#e0e0e0" stroke-width="1.1"/><path d="M677,769.3 L667.7,778.4 H680" fill="none" stroke="#e0e0e0" stroke-width="1.1"/>
<path d="M720.3,768 V786.2" stroke="#3ed36a" stroke-width="1.2"/><path d="M712.2,769.3 L727.5,784.4" stroke="#d8505a" stroke-width="1.2"/><rect x="718.2" y="775.3" width="3.6" height="3.6" fill="#3b4453" stroke="#f0f0f0" stroke-width="0.9"/>
<path d="M761.4,784.4 H781.2" stroke="#b9cbe2" stroke-width="1.2"/><path d="M761.4,784.4 L776,770.4" stroke="#f4f4f4" stroke-width="1.2"/><rect x="766.5" y="775.8" width="3.6" height="3.6" fill="#ffffff"/>
<rect x="793.7" y="770" width="17" height="17.4" fill="none" stroke="#f4f4f4" stroke-width="1.2"/><rect x="791.3" y="768.3" width="5.4" height="5.4" fill="#5d8cc4" stroke="#f4f4f4" stroke-width="1"/>
<polygon points="852.5,768 855.3,776.3 854.4,777.6 861.3,787.8 852.5,783.1 843.7,787.8 850.6,777.6 849.7,776.3" fill="#ffffff"/><circle cx="860.2" cy="772.2" r="3.4" fill="none" stroke="#ffffff" stroke-width="1"/>
<polygon points="882.5,768 885.3,776.3 884.4,777.6 891.3,787.8 882.5,783.1 873.7,787.8 880.6,777.6 879.7,776.3" fill="#d6d6d6"/><polygon points="891.9,768.3 888.2,772.6 890.2,773 887.4,777.2 893,771.8 890.8,771.4" fill="#d6d6d6"/>
<polygon points="913.5,768 916.3,776.3 915.4,777.6 922.3,787.8 913.5,783.1 904.7,787.8 911.6,777.6 910.7,776.3" fill="#d6d6d6"/>
<polygon points="999.20,775.97 999.20,780.03 996.54,779.95 995.77,781.81 997.70,783.64 994.84,786.50 993.01,784.57 991.15,785.34 991.23,788.00 987.17,788.00 987.25,785.34 985.39,784.57 983.56,786.50 980.70,783.64 982.63,781.81 981.86,779.95 979.20,780.03 979.20,775.97 981.86,776.05 982.63,774.19 980.70,772.36 983.56,769.50 985.39,771.43 987.25,770.66 987.17,768.00 991.23,768.00 991.15,770.66 993.01,771.43 994.84,769.50 997.70,772.36 995.77,774.19 996.54,776.05" fill="#dcdcdc"/><circle cx="989.2" cy="778" r="3.7" fill="#3b4453"/>
<path d="M1030,777.5 H1049 M1039.5,768.2 V786.9" stroke="#dcdcdc" stroke-width="2.7"/>
<rect x="1063.3" y="768.6" width="7.3" height="7" fill="none" stroke="#d0d0d0" stroke-width="1"/><circle cx="1078.6" cy="776.5" r="4.4" fill="none" stroke="#d0d0d0" stroke-width="1"/><polygon points="1070.8,780 1074.5,787.2 1067.2,787.2" fill="none" stroke="#d0d0d0" stroke-width="1"/>
<rect x="1104.3" y="770.2" width="19.6" height="14.4" fill="none" stroke="#d4d4d4" stroke-width="1.2"/><path d="M1120.6,773 L1117,776.6 M1107.6,781.8 L1111.2,778.2" stroke="#d4d4d4" stroke-width="1.3"/><polygon points="1121.6,772 1121.6,776.5 1117,772" fill="#d4d4d4"/><polygon points="1106.6,782.8 1106.6,778.3 1111.200,782.8" fill="#d4d4d4"/>
<g fill="#e6e6e6"><rect x="1135.1" y="768.8" width="20" height="2.300"/><rect x="1135.1" y="776.200" width="20" height="2.300"/><rect x="1135.1" y="783.800" width="20" height="2.300"/></g>
</svg>
<div class="t" style="left:77px;top:766.5px;font-size:15px;color:#ffffff;font-weight:bold">模型</div>
<div class="t" style="left:138px;top:766px;font-size:15px;color:#eeeeee">布局1</div>
<div class="t" style="left:208px;top:766px;font-size:15px;color:#eeeeee">布局2</div>
<div class="t" style="left:505px;top:768.7px;font-size:15px;color:#ffffff;font-weight:bold">模型</div>
<div class="t" style="left:935px;top:768.5px;font-size:15px;color:#f4f4f4;-webkit-text-stroke:0.3px #f4f4f4;transform:scaleX(0.76);transform-origin:0 0" id="oneone">1:1</div>
</div>
<!-- WATERMARK -->
<div id="wm">
<div class="t" id="wm1" style="left:816px;top:123px;height:30px;line-height:30px;font-size:21.3px;font-weight:900;letter-spacing:11.4px;transform:scaleX(1.1);transform-origin:0 0;color:#e81822;font-family:'Liberation Sans','Noto Sans CJK SC',sans-serif">我爱分享网</div>
<div class="t" id="wm2" style="left:816.3px;top:154.3px;height:26px;line-height:26px;font-size:17.6px;font-weight:bold;color:#e81822;font-family:'Liberation Serif',serif;letter-spacing:0.3px">www.zhanshaoyi.com</div>
<div class="t" id="wm3" style="left:1048.5px;top:775.5px;font-size:13px;color:#e0101c;font-family:'Liberation Mono',monospace;transform:scaleX(0.89);transform-origin:0 0">zhanshaoyi.com</div>
</div>
</body>
</html>
